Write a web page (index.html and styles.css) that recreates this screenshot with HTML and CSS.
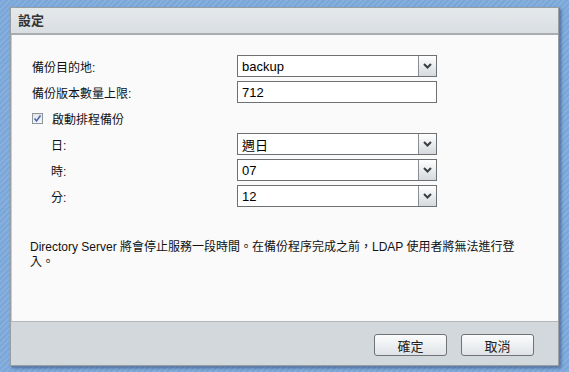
FILE: index.html
```html
<!DOCTYPE html>
<html lang="zh-Hant">
<head>
<meta charset="utf-8">
<title>設定</title>
<link rel="stylesheet" href="styles.css">
</head>
<body>
<div class="window">
  <div class="header">設定</div>
  <div class="content">
    <div class="form">
      <div class="row">
        <span class="label">備份目的地:</span>
        <div class="select"><span class="value">backup</span><span class="arrow"><svg width="9" height="6" viewBox="0 0 9 6"><path d="M1 1 L4.5 4.5 L8 1" fill="none" stroke="#3a3f44" stroke-width="2"/></svg></span></div>
      </div>
      <div class="row">
        <span class="label">備份版本數量上限:</span>
        <div class="input"><span class="value">712</span></div>
      </div>
      <div class="row">
        <span class="check"><svg width="9" height="9" viewBox="0 0 9 9"><path d="M1.5 4.5 L3.5 7 L7.5 1.5" fill="none" stroke="#4f68b3" stroke-width="1.6"/></svg></span>
        <span class="check-label">啟動排程備份</span>
      </div>
      <div class="row">
        <span class="label sub">日:</span>
        <div class="select"><span class="value">週日</span><span class="arrow"><svg width="9" height="6" viewBox="0 0 9 6"><path d="M1 1 L4.5 4.5 L8 1" fill="none" stroke="#3a3f44" stroke-width="2"/></svg></span></div>
      </div>
      <div class="row">
        <span class="label sub">時:</span>
        <div class="select"><span class="value">07</span><span class="arrow"><svg width="9" height="6" viewBox="0 0 9 6"><path d="M1 1 L4.5 4.5 L8 1" fill="none" stroke="#3a3f44" stroke-width="2"/></svg></span></div>
      </div>
      <div class="row">
        <span class="label sub">分:</span>
        <div class="select"><span class="value">12</span><span class="arrow"><svg width="9" height="6" viewBox="0 0 9 6"><path d="M1 1 L4.5 4.5 L8 1" fill="none" stroke="#3a3f44" stroke-width="2"/></svg></span></div>
      </div>
    </div>
    <p class="note">Directory Server 將會停止服務一段時間。在備份程序完成之前，LDAP 使用者將無法進行登入。</p>
  </div>
  <div class="footer">
    <button class="btn">確定</button>
    <button class="btn">取消</button>
  </div>
</div>
</body>
</html>
```

FILE: styles.css
```css
html, body {
  margin: 0;
  padding: 0;
}
body {
  width: 569px;
  height: 372px;
  overflow: hidden;
  background-color: #7ba6d8;
  background-image: repeating-linear-gradient(135deg, #7ba6d8 0px, #7ba6d8 2px, #86afdd 2px, #86afdd 4px);
  font-family: "Liberation Sans", "Noto Sans CJK TC", sans-serif;
  font-size: 12px;
  color: #111;
}
.window {
  margin: 7px 0 0 10px;
  width: 547px;
  height: 357px;
  border: 1px solid #979ea4;
  display: flex;
  flex-direction: column;
  box-shadow: 1px 1px 0 #5d7fa8, 2px 2px 3px rgba(30, 50, 90, 0.55);
  background: #fafafa;
}
.header {
  height: 25px;
  line-height: 25px;
  padding-left: 7px;
  background: linear-gradient(#e5e9ec, #d9dee2);
  border-bottom: 2px solid #a9adb1;
  font-weight: bold;
  font-size: 13px;
  color: #333;
}
.content {
  flex: 1;
  background: #fafafa;
  border-left: 1px solid #c9cdd1;
  padding: 20px 0 0 20px;
}
.form {
  display: flex;
  flex-direction: column;
  gap: 4px;
}
.row {
  display: flex;
  align-items: center;
  height: 22px;
}
.label {
  width: 205px;
  flex: none;
}
.label.sub {
  width: 186px;
  padding-left: 19px;
}
.select, .input {
  width: 198px;
  height: 20px;
  border: 1px solid #6d7174;
  background: #fff;
  display: flex;
  align-items: center;
  font-size: 13px;
  color: #000;
}
.value {
  flex: 1;
  padding-left: 4px;
}
.arrow {
  width: 17px;
  height: 20px;
  border-left: 1px solid #8a8e92;
  background: linear-gradient(#ffffff, #d5d9dd);
  display: flex;
  align-items: center;
  justify-content: center;
}
.check {
  width: 9px;
  height: 9px;
  border: 1px solid #8e959b;
  background: linear-gradient(#e4e7ea, #f6f7f8);
  display: flex;
  align-items: center;
  justify-content: center;
  margin-right: 9px;
}
.check-label {
  font-size: 12px;
}
.note {
  margin: 33px 0 0 -2px;
  width: 490px;
  line-height: 15px;
  font-size: 12px;
}
.footer {
  border-top: 1px solid #b3b7bb;
  background: #d3d8dc;
  display: flex;
  align-items: flex-start;
  justify-content: flex-end;
  gap: 14px;
  padding: 12px 24px 0 0;
  box-sizing: border-box;
  height: 44px;
}
.btn {
  width: 73px;
  height: 22px;
  border: 1px solid #6f7377;
  border-radius: 3px;
  background: linear-gradient(#fbfcfc, #dfe3e7);
  font-family: "Liberation Sans", "Noto Sans CJK TC", sans-serif;
  font-size: 13px;
  color: #222;
  padding: 0;
}
```
